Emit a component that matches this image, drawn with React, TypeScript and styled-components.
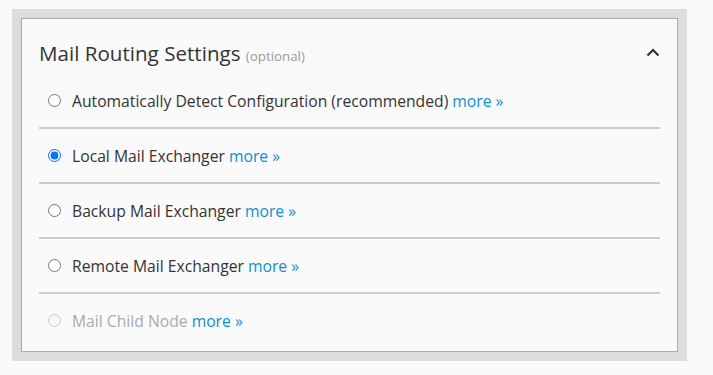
import React from "react";
import styled, { createGlobalStyle } from "styled-components";

const Global = createGlobalStyle`
  html, body { margin: 0; padding: 0; background: #fafafa; }
  body { font-family: "Open Sans", "Liberation Sans", sans-serif; color: #333; }
`;

const Page = styled.div`
  padding: 9px 0 0 12px;
`;

const Frame = styled.div`
  width: 675px;
  box-sizing: border-box;
  background: #dddddd;
  padding: 9px;
`;

const Panel = styled.section`
  background: #fafafa;
  border: 1px solid #aaaaaa;
  padding: 0 17px 4px;
`;

const Header = styled.div`
  display: flex;
  align-items: center;
  justify-content: space-between;
  height: 55px;
  padding-top: 15px;
  box-sizing: border-box;
`;

const Title = styled.h2`
  margin: 0;
  font-size: 20.6px;
  font-weight: 400;
  color: #333;
  line-height: 28px;
`;

const Optional = styled.span`
  font-size: 13.3px;
  color: #999;
`;

const Toggle = styled.button`
  border: 0;
  background: none;
  padding: 0;
  margin-top: -3px;
  display: flex;
  cursor: pointer;
`;

const List = styled.div`
  display: flex;
  flex-direction: column;
`;

const Row = styled.label<{ $disabled?: boolean; $last?: boolean }>`
  display: flex;
  align-items: center;
  height: 53px;
  padding-left: 9px;
  border-bottom: ${(p) => (p.$last ? "none" : "2px solid #cccccc")};
  font-size: 15.7px;
  color: ${(p) => (p.$disabled ? "#aaaaaa" : "#333333")};
  white-space: pre;
`;

const Radio = styled.input`
  margin: 0 11px 0 0;
  width: 13px;
  height: 13px;
`;

const More = styled.a`
  color: #0d8fd3;
  text-decoration: none;
`;

const options = [
  { label: "Automatically Detect Configuration (recommended)", checked: false },
  { label: "Local Mail Exchanger", checked: true },
  { label: "Backup Mail Exchanger", checked: false },
  { label: "Remote Mail Exchanger", checked: false },
  { label: "Mail Child Node", checked: false, disabled: true },
];

export default function App() {
  return (
    <Page>
      <Global />
      <Frame>
        <Panel>
          <Header>
            <Title>
              Mail Routing Settings <Optional>(optional)</Optional>
            </Title>
            <Toggle aria-label="collapse">
              <svg width="14" height="9" viewBox="0 0 14 9">
                <polyline points="1.5,7.5 7,2 12.5,7.5" fill="none" stroke="#333" strokeWidth="2.2" />
              </svg>
            </Toggle>
          </Header>
          <List>
            {options.map((o, i) => (
              <Row key={o.label} $disabled={o.disabled} $last={i === options.length - 1}>
                <Radio type="radio" name="routing" defaultChecked={o.checked} disabled={o.disabled} />
                {o.label + " "}
                <More href="#">more »</More>
              </Row>
            ))}
          </List>
        </Panel>
      </Frame>
    </Page>
  );
}
